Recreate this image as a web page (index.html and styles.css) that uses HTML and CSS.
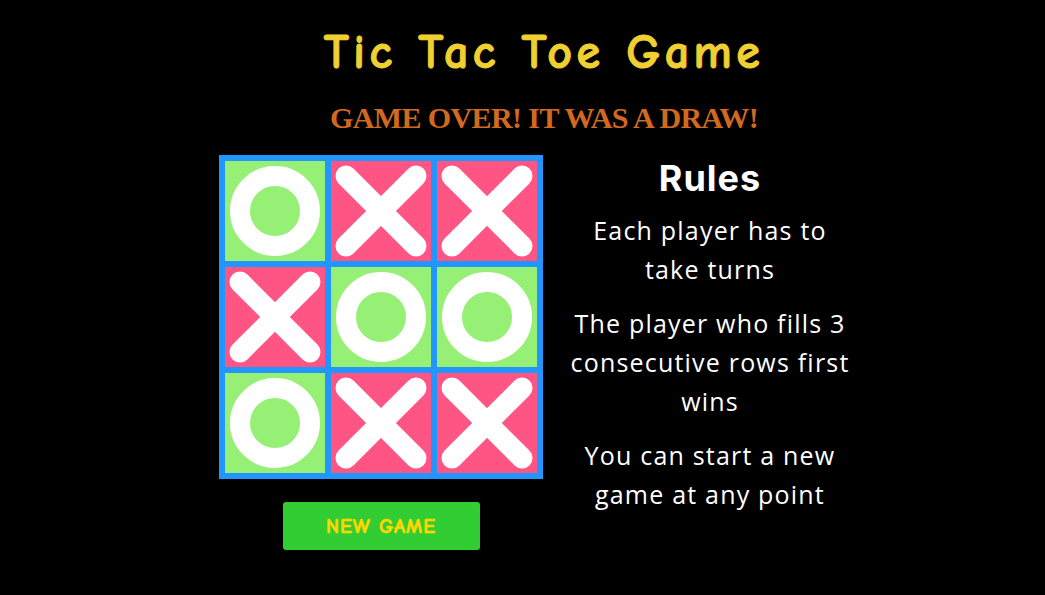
FILE: index.html
```html
<!DOCTYPE html>
<html lang="en">
<head>
<meta charset="utf-8">
<title>Tic Tac Toe Game</title>
<link rel="stylesheet" href="styles.css">
</head>
<body>
<main class="page">
  <header class="header">
    <h1 class="title">Tic Tac Toe Game</h1>
    <h2 class="status">Game over! It was a draw!</h2>
  </header>
  <div class="content">
    <div class="game">
      <div class="board">
        <div class="cell cell-o"><svg viewBox="0 0 100 100"><circle cx="50" cy="50" r="35"/></svg></div>
        <div class="cell cell-x"><svg viewBox="0 0 100 100"><path d="M15 15L85 85M85 15L15 85"/></svg></div>
        <div class="cell cell-x"><svg viewBox="0 0 100 100"><path d="M15 15L85 85M85 15L15 85"/></svg></div>
        <div class="cell cell-x"><svg viewBox="0 0 100 100"><path d="M15 15L85 85M85 15L15 85"/></svg></div>
        <div class="cell cell-o"><svg viewBox="0 0 100 100"><circle cx="50" cy="50" r="35"/></svg></div>
        <div class="cell cell-o"><svg viewBox="0 0 100 100"><circle cx="50" cy="50" r="35"/></svg></div>
        <div class="cell cell-o"><svg viewBox="0 0 100 100"><circle cx="50" cy="50" r="35"/></svg></div>
        <div class="cell cell-x"><svg viewBox="0 0 100 100"><path d="M15 15L85 85M85 15L15 85"/></svg></div>
        <div class="cell cell-x"><svg viewBox="0 0 100 100"><path d="M15 15L85 85M85 15L15 85"/></svg></div>
      </div>
      <button class="new-game" type="button">New Game</button>
    </div>
    <section class="rules">
      <h3 class="rules-title">Rules</h3>
      <p class="rule">Each player has to take turns</p>
      <p class="rule">The player who fills 3 consecutive rows first wins</p>
      <p class="rule">You can start a new game at any point</p>
    </section>
  </div>
</main>
</body>
</html>
```

FILE: styles.css
```css
* {
  box-sizing: border-box;
}

html, body {
  margin: 0;
  padding: 0;
  background: #000;
}

body {
  font-family: "Open Sans", "Noto Sans", sans-serif;
  color: #fff;
  height: 595px;
  overflow: hidden;
}

.header {
  padding: 24px 0 0 43px;
  text-align: center;
}

.title {
  margin: 0;
  font-family: "Comic Sans MS", "Comic Neue", cursive;
  font-size: 48px;
  line-height: 58px;
  font-weight: 700;
  letter-spacing: 4.5px;
  color: #f0d030;
  -webkit-text-stroke: 1px #f0d030;
}

.status {
  margin: 18px 0 0;
  font-family: "Liberation Serif", serif;
  font-size: 30px;
  line-height: 36px;
  font-weight: bold;
  text-transform: uppercase;
  color: #d2691e;
  letter-spacing: -0.6px;
}

.content {
  display: flex;
  align-items: flex-start;
  gap: 21px;
  padding: 19px 0 0 219px;
}

.game {
  display: flex;
  flex-direction: column;
  align-items: center;
  width: 324px;
}

.board {
  display: grid;
  grid-template-columns: repeat(3, 100px);
  grid-template-rows: repeat(3, 100px);
  gap: 6px;
  padding: 6px;
  background: #2196ff;
}

.cell {
  width: 100px;
  height: 100px;
}

.cell svg {
  display: block;
  width: 100px;
  height: 100px;
  fill: none;
  stroke: #fff;
}

.cell-o {
  background: #95f075;
}

.cell-o circle {
  stroke-width: 20;
}

.cell-x {
  background: #ff5585;
}

.cell-x path {
  stroke-width: 21;
  stroke-linecap: round;
}

.new-game {
  margin-top: 23px;
  width: 197px;
  height: 48px;
  border: none;
  border-radius: 3px;
  background: #32cd32;
  color: #ffd700;
  font-family: "Comic Sans MS", "Comic Neue", cursive;
  font-size: 20px;
  font-weight: bold;
  letter-spacing: 1px;
  text-transform: uppercase;
  padding: 0;
  -webkit-text-stroke: 0.6px #ffd700;
}

.rules {
  width: 292px;
  text-align: center;
}

.rules-title {
  margin: 0 0 -5px;
  font-family: "Inter", "Noto Sans", sans-serif;
  font-size: 36px;
  line-height: 46px;
  font-weight: 700;
  letter-spacing: 1px;
}

.rule {
  margin: 15px 0 0;
  font-size: 25px;
  line-height: 39px;
  letter-spacing: 1.2px;
}
```
